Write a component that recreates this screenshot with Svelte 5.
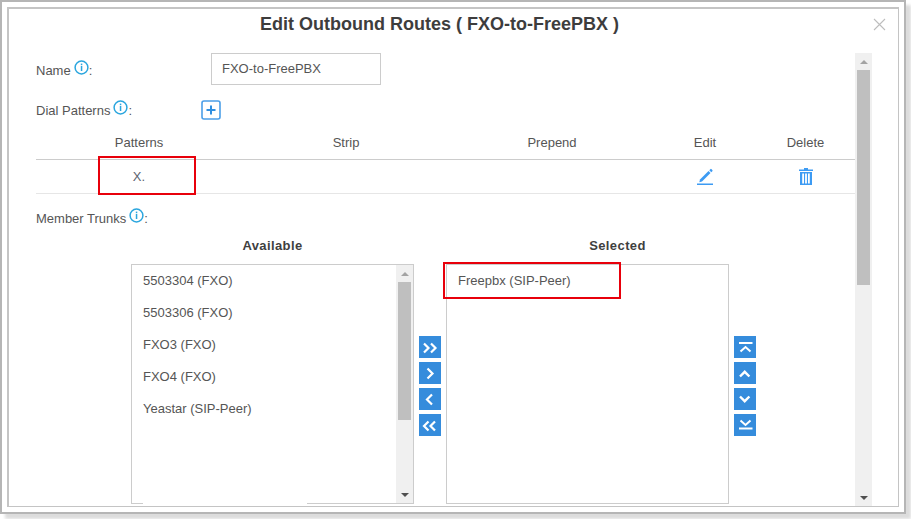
<script>
	const available = ['5503304 (FXO)', '5503306 (FXO)', 'FXO3 (FXO)', 'FXO4 (FXO)', 'Yeastar (SIP-Peer)'];
	const selected = ['Freepbx (SIP-Peer)'];
	const columns = ['Patterns', 'Strip', 'Prepend', 'Edit', 'Delete'];
	const moveButtons = [
		'M5 7.500l4.500 4.500-4.500 4.500M12 7.500l4.500 4.500-4.500 4.500',
		'M8.500 6.500l5 5-5 5',
		'M13 6.500l-5 5 5 5',
		'M9.500 7.500l-4.500 4.500 4.500 4.500M16 7.500l-4.500 4.500 4.500 4.500'
	];
	const orderButtons = [
		{ d: 'M5 7h13.500M6.500 15.500l5-4.500 5 4.500', w: 2 },
		{ d: 'M6 14.500l4.700-4.700 4.700 4.700', w: 2.4 },
		{ d: 'M6 8.500l4.700 4.700 4.700-4.700', w: 2.4 },
		{ d: 'M6.500 6.500l5 4.500 5-4.500M5 14.500h13.500', w: 2 }
	];
</script>

{#snippet info()}
	<svg class="info" width="15" height="15" viewBox="0 0 15 15">
		<circle cx="7.5" cy="7.5" r="6.4" fill="none" stroke="#2ba6de" stroke-width="1.5" />
		<rect x="6.8" y="3.6" width="1.5" height="1.6" fill="#2ba6de" />
		<rect x="6.8" y="6" width="1.5" height="5" fill="#2ba6de" />
	</svg>
{/snippet}

{#snippet scrollArrows(thumbClass)}
	<div class="arrow up"></div>
	<div class="thumb {thumbClass}"></div>
	<div class="arrow down"></div>
{/snippet}

<div class="page">
	<div class="frame">
		<div class="dialog">
			<header class="head">
				<h1>Edit Outbound Routes ( FXO-to-FreePBX )</h1>
				<svg class="close" width="13" height="13" viewBox="0 0 13 13">
					<path d="M1 1l11 11M12 1L1 12" stroke="#bdbdbd" stroke-width="1.1" fill="none" />
				</svg>
			</header>

			<div class="body">
				<div class="content">
					<div class="field name">
						<div class="label">Name{@render info()}:</div>
						<div class="input">FXO-to-FreePBX</div>
					</div>

					<div class="field dial">
						<div class="label">Dial Patterns{@render info()}:</div>
						<svg class="add" width="20" height="20" viewBox="0 0 20 20">
							<rect x="1" y="1" width="18" height="18" rx="2" fill="none" stroke="#4b9fe8" stroke-width="1.6" />
							<path d="M10 5.5v9M5.5 10h9" stroke="#2f8fe0" stroke-width="2" />
						</svg>
					</div>

					<div class="table">
						<div class="row thead">
							{#each columns as c}
								<div>{c}</div>
							{/each}
						</div>
						<div class="row tbody">
							<div class="pattern">X.<span class="redbox pattern-box"></span></div>
							<div></div>
							<div></div>
							<div>
								<svg width="18" height="17" viewBox="0 0 18 17">
									<path d="M4 11.5l8.5-8.5 2 2-8.500 8.500-2.700.700z" fill="#3d9bf3" />
									<path d="M13.300 2.200l1-1a.9.9 0 011.300 0l.7.700a.9.900 0 010 1.300l-1 1z" fill="#3d9bf3" />
									<rect x="1" y="15.500" width="16" height="1.500" fill="#3d9bf3" />
								</svg>
							</div>
							<div>
								<svg width="14" height="17" viewBox="0 0 14 17">
									<path d="M5 0h4v1.500h5V3H0V1.500h5z" fill="#3d9bf3" />
									<path d="M1 4h12v13H1zM3.200 5.500v10h1.800v-10zM6.100 5.500v10h1.800v-10zM9 5.500v10h1.800v-10z" fill="#3d9bf3" fill-rule="evenodd" />
								</svg>
							</div>
						</div>
					</div>

					<div class="label trunks">Member Trunks{@render info()}:</div>

					<div class="transfer">
						<div class="side">
							<div class="side-title">Available</div>
							<div class="list">
								<div class="items">
									{#each available as item}
										<div class="item">{item}</div>
									{/each}
								</div>
								<div class="list-bar">
									{@render scrollArrows('list-thumb')}
								</div>
								<span class="border-gap"></span>
							</div>
						</div>

						<div class="buttons">
							{#each moveButtons as d}
								<div class="btn">
									<svg width="22" height="22" viewBox="0 0 22 22">
										<path {d} fill="none" stroke="#fff" stroke-width="2.200" />
									</svg>
								</div>
							{/each}
						</div>

						<div class="side">
							<div class="side-title selected-title">Selected</div>
							<div class="list">
								<div class="items">
									{#each selected as item}
										<div class="item">{item}</div>
									{/each}
								</div>
								<span class="redbox selected-box"></span>
							</div>
						</div>

						<div class="buttons">
							{#each orderButtons as b}
								<div class="btn">
									<svg width="22" height="22" viewBox="0 0 22 22">
										<path d={b.d} fill="none" stroke="#fff" stroke-width={b.w} />
									</svg>
								</div>
							{/each}
						</div>
					</div>
				</div>

				<div class="page-bar">
					{@render scrollArrows('page-thumb')}
				</div>
			</div>
		</div>
	</div>
</div>

<style>
	:global(body) {
		margin: 0;
		background: #fff;
	}
	.page {
		width: 911px;
		height: 519px;
		overflow: hidden;
	}
	.frame {
		box-sizing: border-box;
		width: 906px;
		height: 514px;
		padding: 5px;
		background: #fff;
		border: 2px solid #b5b5b5;
		box-shadow: 5px 5px 3px #dcdcdc;
		font-family: 'Liberation Sans', Arial, sans-serif;
		font-size: 13px;
		color: #555;
	}
	.dialog {
		box-sizing: border-box;
		height: 100%;
		border: 2px solid #c4c4c4;
		border-bottom-width: 1px;
		border-right-width: 1px;
		background: #fff;
		display: flex;
		flex-direction: column;
		overflow: hidden;
	}
	.head {
		height: 44px;
		position: relative;
		flex: none;
	}
	h1 {
		margin: 0;
		padding-top: 4px;
		padding-right: 28px;
		font-size: 18px;
		line-height: 22px;
		font-weight: bold;
		color: #3d3d3d;
		text-align: center;
	}
	.close {
		position: absolute;
		right: 12px;
		top: 9px;
	}
	.body {
		display: flex;
		flex: 1;
		min-height: 0;
	}
	.content {
		width: 819px;
		margin-left: 27px;
		flex: none;
	}
	.page-bar {
		width: 17px;
		background: #f0f0f0;
		display: flex;
		flex-direction: column;
		align-items: center;
	}
	.arrow {
		height: 17px;
		flex: none;
		width: 100%;
		position: relative;
	}
	.arrow::after {
		content: '';
		position: absolute;
		left: 50%;
		margin-left: -4px;
		border-left: 4px solid transparent;
		border-right: 4px solid transparent;
	}
	.arrow.up::after {
		top: 7px;
		border-bottom: 4px solid #a3a3a3;
	}
	.arrow.down {
		margin-top: auto;
	}
	.arrow.down::after {
		top: 7px;
		border-top: 4px solid #505050;
	}
	.thumb {
		width: 13px;
		background: #bfbfbf;
	}
	.page-thumb {
		height: 215px;
	}
	.list-thumb {
		height: 138px;
	}
	.field {
		display: flex;
		align-items: center;
	}
	.name {
		height: 32px;
	}
	.name .label {
		margin-top: 4px;
	}
	.input {
		box-sizing: border-box;
		width: 170px;
		height: 32px;
		margin-left: 175px;
		padding: 0 10px;
		line-height: 30px;
		border: 1px solid #ccc;
		white-space: nowrap;
	}
	.label {
		width: 0;
		white-space: nowrap;
		line-height: 16px;
	}
	.info {
		margin: -4px 0 -4px 3px;
		vertical-align: 4px;
	}
	.dial {
		height: 20px;
		margin-top: 15px;
	}
	.dial .label {
		margin-top: 2px;
	}
	.add {
		margin-left: 165px;
	}
	.table {
		margin-top: 6px;
	}
	.row {
		display: grid;
		grid-template-columns: 206px 208px 204px 102px 99px;
		text-align: center;
		align-items: center;
	}
	.thead {
		height: 33px;
		border-bottom: 1px solid #ccc;
	}
	.tbody {
		height: 33px;
		border-bottom: 1px solid #e6e6e6;
	}
	.tbody svg {
		display: block;
		margin: 0 auto;
	}
	.pattern {
		position: relative;
		color: #5c6470;
	}
	.redbox {
		position: absolute;
		box-sizing: border-box;
		border: 2px solid #e8000b;
		pointer-events: none;
	}
	.pattern-box {
		left: 62px;
		top: -13px;
		width: 98px;
		height: 39px;
	}
	.trunks {
		margin-top: 17px;
	}
	.transfer {
		display: flex;
		margin-top: 10px;
		padding-left: 95px;
	}
	.side {
		width: 283px;
		flex: none;
	}
	.side-title {
		height: 27px;
		line-height: 18px;
		font-weight: bold;
		text-align: center;
		color: #3f3f3f;
		letter-spacing: 0.4px;
	}
	.selected-title {
		padding-left: 60px;
	}
	.list {
		box-sizing: border-box;
		height: 240px;
		border: 1px solid #ccc;
		display: flex;
		position: relative;
	}
	.items {
		flex: 1;
	}
	.item {
		height: 32px;
		line-height: 32px;
		padding-left: 11px;
	}
	.list-bar {
		width: 17px;
		background: #f0f0f0;
		display: flex;
		flex-direction: column;
		align-items: center;
	}
	.border-gap {
		position: absolute;
		left: 11px;
		bottom: -1px;
		width: 164px;
		height: 1px;
		background: #fff;
	}
	.selected-box {
		left: -4px;
		top: -3px;
		width: 178px;
		height: 37px;
	}
	.buttons {
		width: 32px;
		flex: none;
		display: flex;
		flex-direction: column;
		align-items: center;
		gap: 4px;
		padding-top: 99px;
	}
	.btn {
		width: 22px;
		height: 22px;
		background: #358cdc;
	}
	.btn svg {
		display: block;
	}
</style>
